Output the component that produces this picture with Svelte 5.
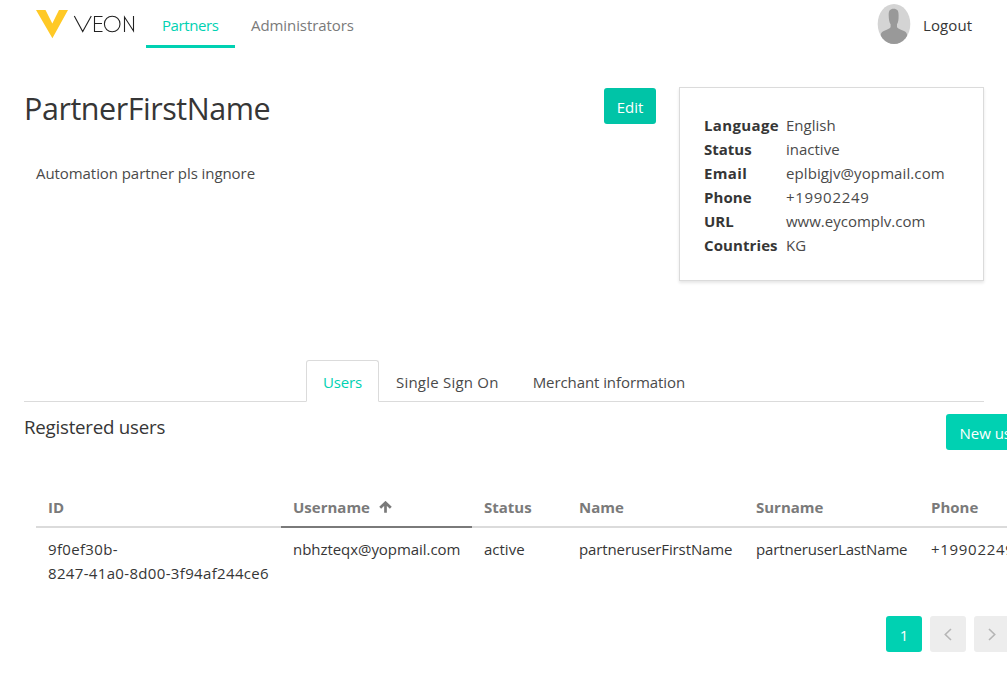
<script>
  const details = [
    ['Language', 'English'],
    ['Status', 'inactive'],
    ['Email', 'eplbigjv@yopmail.com'],
    ['Phone', '+19902249'],
    ['URL', 'www.eycomplv.com'],
    ['Countries', 'KG']
  ];
</script>

<div class="page">
  <header>
    <svg class="logo" width="100" height="30" viewBox="0 0 100 30" aria-label="VEON">
      <path d="M0 0h9.5l6.8 13.500L23 0h9L16.400 28.200z" fill="#ffc926" />
      <g fill="none" stroke="#222" stroke-width="1.1">
        <path d="M38.300 6l8.400 15.500L55.300 6M66.500 6.500H58.500v15h8M58.500 13.500h7.500M88.500 22V7l9 14V6" />
        <ellipse cx="76.2" cy="14" rx="7.8" ry="7.8" />
      </g>
    </svg>
    <nav>
      <a class="active"><span class="t1">Partners</span></a>
      <a><span class="t2">Administrators</span></a>
    </nav>
    <div class="account">
      <svg width="34" height="40" viewBox="0 0 34 40">
        <defs><clipPath id="face"><ellipse cx="17" cy="20" rx="16.3" ry="20" /></clipPath></defs>
        <g clip-path="url(#face)">
          <rect width="34" height="40" fill="#d4d4d4" />
          <path d="M11.700 11.500C11.500 6.800 13 4.800 16.600 4.800s5.200 2 5 6.700c.1 4-.4 7-1.600 8.800v2.800c.8 2.200 4.500 2.600 7.500 4.200 1.800 1 2.500 2.400 2.700 4.500V40H3.600v-8.200c.2-2.100.9-3.500 2.700-4.500 3-1.600 6.500-2 7.300-4.200v-2.800c-1.300-1.800-1.800-4.800-1.900-8.800z" fill="#999" />
        </g>
      </svg>
      <span class="logout">Logout</span>
    </div>
  </header>

  <section class="profile">
    <div class="intro">
      <h1>PartnerFirstName</h1>
      <p>Automation partner pls ingnore</p>
    </div>
    <button class="edit"><span>Edit</span></button>
    <dl>
      {#each details as [label, value], i}
        <dt class="k{i}">{label}</dt>
        <dd class="v{i}">{value}</dd>
      {/each}
    </dl>
  </section>

  <div class="tabs">
    <a class="active"><span class="tab1">Users</span></a>
    <a><span class="tab2">Single Sign On</span></a>
    <a><span class="tab3">Merchant information</span></a>
  </div>

  <div class="subhead">
    <h2>Registered users</h2>
    <button><span>New user</span></button>
  </div>

  <table>
    <thead>
      <tr>
        <th>ID</th>
        <th class="sorted">
          <span class="name">Username</span>
          <svg width="14" height="12" viewBox="0 0 14 12"><path d="M6.500 11.700V1.800M1.200 6.800L6.500 1.700 11.800 6.800" fill="none" stroke="#7a7a7a" stroke-width="2.700" /></svg>
        </th>
        <th>Status</th>
        <th>Name</th>
        <th>Surname</th>
        <th>Phone</th>
      </tr>
    </thead>
    <tbody>
      <tr>
        <td class="id">9f0ef30b-<br />8247-41a0-8d00-3f94af244ce6</td>
        <td class="mail">nbhzteqx@yopmail.com</td>
        <td class="state">active</td>
        <td class="first">partneruserFirstName</td>
        <td class="last">partneruserLastName</td>
        <td class="tel">+19902249</td>
      </tr>
    </tbody>
  </table>

  <div class="pagination">
    <button class="current">1</button>
    <button><svg width="10" height="14" viewBox="0 0 10 14"><path d="M8 2L2.300 7.500 8 13" /></svg></button>
    <button><svg width="10" height="14" viewBox="0 0 10 14"><path d="M2 2L7.700 7.500 2 13" /></svg></button>
  </div>
</div>

<style>
  :global(body) { margin: 0; overflow: hidden; background: #fff; }
  .page {
    width: 1007px; height: 699px; overflow: hidden;
    font: 15px/24px "Open Sans", sans-serif; color: #363636;
    display: flex; flex-direction: column;
  }
  .page * { box-sizing: border-box; }
  span, td, th, h1, h2, p, dt, dd { white-space: nowrap; }
  button {
    font: inherit; border: 0; border-radius: 3px; background: #00d1b2; color: #fff;
    height: 36px; padding: 2px 0 0; flex: none; display: flex; align-items: center; justify-content: center;
  }
  header { display: flex; height: 48px; flex: none; padding-left: 36px; }
  .logo { margin-top: 10px; flex: none; }
  nav { display: flex; margin-left: 10px; }
  nav a { padding: 13px 16px 0; color: #7a7a7a; height: 48px; }
  nav a.active { color: #00d1b2; border-bottom: 3px solid #00d1b2; width: 89px; }
  .t1 { letter-spacing: -.4px; }
  .t2 { letter-spacing: -.08px; }
  .account { display: flex; margin-left: auto; width: 130px; padding-top: 4px; }
  .account svg { flex: none; }
  .logout { margin: 9px 0 0 12px; letter-spacing: .1px; }

  .profile { display: flex; height: 312px; flex: none; padding: 39px 23px 0 24px; align-items: flex-start; }
  .intro { width: 580px; }
  h1 { margin: 0; font-size: 30.5px; line-height: 36px; font-weight: 400; padding-top: 3px; letter-spacing: -.46px; }
  p { margin: 35px 0 0 12px; color: #4a4a4a; letter-spacing: -.07px; }
  .edit { width: 52px; margin-top: 1px; background: #00c4a7; }
  dl {
    margin: 0 0 0 23px; width: 305px; height: 194px; padding: 25px 24px;
    border: 1px solid #dbdbdb; box-shadow: 0 2px 3px rgba(10, 10, 10, .1);
    display: grid; grid-template-columns: 82px 1fr; grid-auto-rows: 24px;
  }
  dt { font-weight: 700; }
  dd { margin: 0; color: #4a4a4a; }
  .k0, .k2 { letter-spacing: .35px; }
  .k3, .k5 { letter-spacing: .1px; }
  .v2 { letter-spacing: .1px; }
  .v3, .tel { letter-spacing: .7px; }

  .tabs { display: flex; justify-content: center; margin: 0 23px 0 24px; height: 42px; flex: none; border-bottom: 1px solid #dbdbdb; }
  .tabs a { height: 42px; padding: 9px 16px 0; border: 1px solid transparent; color: #4a4a4a; border-radius: 3px 3px 0 0; }
  .tabs a.active { color: #00d1b2; border-color: #dbdbdb; border-bottom-color: #fff; background: #fff; }
  .tab1 { letter-spacing: -.15px; }
  .tab2 { letter-spacing: .22px; }
  .tab3 { letter-spacing: -.08px; }

  .subhead { display: flex; justify-content: space-between; height: 85px; flex: none; padding: 12px 0 0 24px; }
  h2 { margin: 0; font-size: 18.7px; font-weight: 400; line-height: 26px; letter-spacing: -.23px; }
  .subhead button { width: 93px; margin-right: -32px; }

  table { margin-left: 36px; width: 1080px; flex: none; border-collapse: collapse; table-layout: fixed; }
  th, td { text-align: left; padding: 8px 12px; vertical-align: top; }
  th { height: 40px; padding-bottom: 6px; color: #7a7a7a; border-bottom: 2px solid #dbdbdb; }
  td { padding-top: 9px; }
  th:nth-child(1) { width: 245px; }
  th:nth-child(2) { width: 191px; }
  th:nth-child(3) { width: 95px; }
  th:nth-child(4) { width: 177px; }
  th:nth-child(5) { width: 175px; }
  th.sorted { border-color: #7a7a7a; }
  .sorted svg { margin-left: 5px; }
  .id { letter-spacing: .34px; }
  .mail { letter-spacing: -.05px; }
  .first { letter-spacing: -.12px; }
  .last { letter-spacing: -.15px; }

  .pagination { display: flex; gap: 8px; margin: 23px 0 0 886px; }
  .pagination button { width: 36px; background: #ededed; padding: 0; }
  .pagination .current { background: #00d1b2; padding-top: 2px; }
  .pagination path { fill: none; stroke: #b5b5b5; stroke-width: 1.600; }
</style>
